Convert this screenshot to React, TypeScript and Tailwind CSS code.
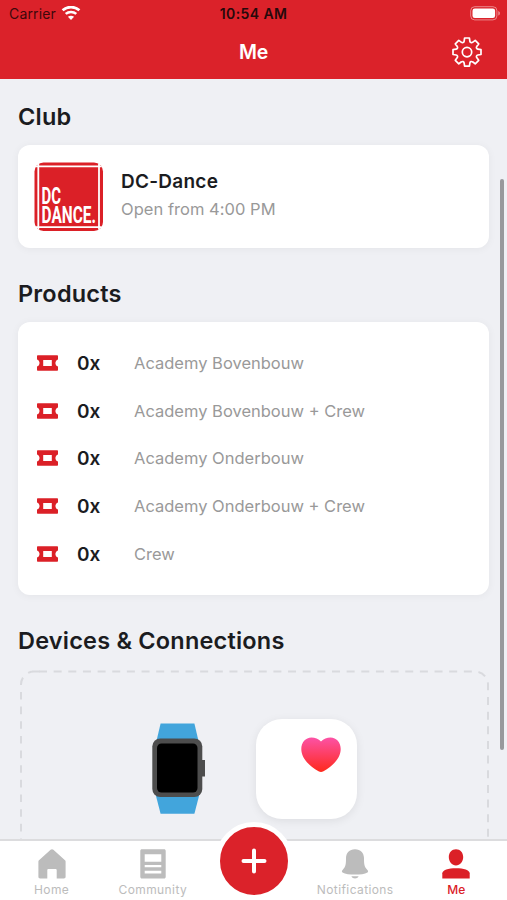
import React from 'react';

interface Product {
  id: number;
  count: number;
  name: string;
}

const products: Product[] = [
  { id: 1, count: 0, name: 'Academy Bovenbouw' },
  { id: 2, count: 0, name: 'Academy Bovenbouw + Crew' },
  { id: 3, count: 0, name: 'Academy Onderbouw' },
  { id: 4, count: 0, name: 'Academy Onderbouw + Crew' },
  { id: 5, count: 0, name: 'Crew' },
];

const WifiIcon = () => (
  <svg width="20" height="16" viewBox="0 0 20 16" fill="none" stroke="#fff">
    <path d="M1.6 4.3C6.4 0 13.6 0 18.4 4.3" strokeWidth="2.7" />
    <path d="M4.7 7.9c3-2.7 7.6-2.7 10.6 0" strokeWidth="2.5" />
    <path d="M10 14 6.900 10.800c1.700-1.500 4.500-1.500 6.200 0Z" fill="#fff" stroke="none" />
  </svg>
);

const BatteryIcon = () => (
  <svg width="31" height="15" viewBox="0 0 31 15" fill="none">
    <rect x="0.7" y="0.7" width="26.2" height="13.2" rx="4" stroke="#fff" strokeOpacity="0.45" />
    <rect x="2.5" y="2.5" width="22.6" height="9.6" rx="2.3" fill="#fff" />
    <path d="M28.3 5v4.6c1-.4 1.6-1.3 1.6-2.3S29.3 5.4 28.3 5Z" fill="#fff" fillOpacity="0.5" />
  </svg>
);

const GearIcon = () => (
  <svg width="32" height="32" viewBox="0 0 32 32" fill="none" stroke="#fff" strokeWidth="1.7" strokeLinejoin="round">
    <path d="M13.6 1h4.800l.5 3.300c.2 1.200 1.700 1.800 2.600 1.100l2.700-2 3.500 3.500-2 2.700c-.7.900-.1 2.400 1.100 2.600l3.200.5v4.800l-3.200.5c-1.200.2-1.800 1.700-1.100 2.600l2 2.700-3.500 3.500-2.700-2c-.9-.7-2.400-.1-2.600 1.100l-.5 3.300h-4.800l-.5-3.300c-.2-1.200-1.700-1.800-2.600-1.100l-2.700 2-3.500-3.500 2-2.700c.7-.9.1-2.400-1.100-2.600l-3.200-.5v-4.800l3.200-.5c1.200-.2 1.800-1.700 1.100-2.600l-2-2.700 3.500-3.500 2.700 2c.9.700 2.400.1 2.600-1.100Z" />
    <circle cx="16" cy="15.100" r="4.700" />
  </svg>
);

const ClubLogo = () => (
  <svg
    width="70"
    height="70"
    viewBox="0 0 70 70"
    fontFamily="Roboto, sans-serif"
    fontWeight="700"
    fill="#fff"
    className="overflow-visible"
  >
    <rect x="0.5" y="0.5" width="68.5" height="68.5" rx="9" fill="#db2027" />
    <path d="M2 4.300h65.500M2 65.200h65.500M4.300 2v65.500M65 2v65.500" stroke="#fff" strokeWidth="1.800" />
    <text x="7.500" y="41.700" fontSize="23" textLength="19.500" lengthAdjust="spacingAndGlyphs">
      DC
    </text>
    <text x="7.500" y="60.700" fontSize="23" textLength="54.500" lengthAdjust="spacingAndGlyphs">
      DANCE.
    </text>
  </svg>
);

const TicketIcon = () => (
  <svg width="21" height="16" viewBox="0 0 21 16" fill="#db2027" className="block">
    <path
      fillRule="evenodd"
      d="M1 .3h19c.6 0 1 .4 1 1v3.200c-3.400 1-3.400 6 0 7v3.200c0 .6-.4 1-1 1H1c-.6 0-1-.4-1-1v-3.200c3.400-1 3.400-6 0-7V1.300c0-.6.4-1 1-1ZM6.200 5v6h8.600V5Z"
    />
  </svg>
);

const WatchIcon = () => (
  <svg width="54" height="92" viewBox="0 0 54 92">
    <path d="M8.600.5h33.800L47 20v53l-4.600 17.800H8.600L4 73V20Z" fill="#42a5dc" />
    <rect x="48" y="37" width="5" height="16.5" fill="#4d4d4d" />
    <rect x="0.3" y="15.5" width="50" height="58.5" rx="8" fill="#4d4d4d" />
    <rect x="5" y="20.5" width="40.5" height="49" rx="4.5" fill="#000" />
  </svg>
);

const HeartIcon = () => (
  <svg width="40" height="36" viewBox="0 0 40 36">
    <defs>
      <linearGradient id="heart" x1="0" y1="0" x2="0" y2="1">
        <stop offset="0" stopColor="#fc52a6" />
        <stop offset="1" stopColor="#fe2a1c" />
      </linearGradient>
    </defs>
    <path
      fill="url(#heart)"
      d="M20 4.500C22.500 2 26 .5 29.500.5 35.500.5 39.700 5.500 39.700 12c0 9-7.700 17-17.200 22.300-1.800 1-3.200 1-5 0C8 29 .3 21 .3 12 .3 5.500 4.500.5 10.500.5 14 .5 17.500 2 20 4.500Z"
    />
  </svg>
);

const HomeIcon = () => (
  <svg width="28" height="30" viewBox="0 0 28 30" fill="#bcbcbc">
    <path d="M12.600.7c.8-.7 2-.7 2.800 0L27 11.200c.4.400.6.800.6 1.400v15.200c0 .9-.7 1.700-1.700 1.700h-7.200v-8.300c0-.7-.5-1.200-1.200-1.200h-7c-.7 0-1.200.5-1.200 1.200v8.300H2.100c-1 0-1.700-.8-1.700-1.700V12.600c0-.6.2-1 .6-1.400Z" />
  </svg>
);

const CommunityIcon = () => (
  <svg width="28" height="30" viewBox="0 0 28 30" fill="#bcbcbc">
    <path
      fillRule="evenodd"
      d="M2.800.3h22.400c.8 0 1.500.7 1.500 1.500v26.200c0 .8-.7 1.500-1.500 1.500H2.800c-.8 0-1.500-.7-1.500-1.500V1.800c0-.8.7-1.500 1.500-1.500ZM5.700 5.300v7.500h16.600V5.300ZM5.700 16v2.200h16.600V16ZM5.700 21.700v2.700h16.600v-2.700Z"
    />
  </svg>
);

const BellIcon = () => (
  <svg width="28" height="30" viewBox="0 0 28 30" fill="#bcbcbc">
    <path d="M14 .3c5.700 0 8.900 3.700 9 8.800 0 6 .2 8.700 3.200 11.600 1 1 1.300 2 .3 2.700-2.700 1.500-7.300 2.200-12.500 2.200S4.200 24.900 1.500 23.400c-1-.7-.7-1.700.3-2.700 3-2.900 3.200-5.600 3.200-11.600C5.100 4 8.300.3 14 .3Z" />
    <path d="M10.400 27.300h7.200c-.7 1.500-2 2.200-3.600 2.200s-2.900-.7-3.600-2.200Z" />
  </svg>
);

const PersonIcon = () => (
  <svg width="28" height="30" viewBox="0 0 28 30" fill="#db2027">
    <path d="M14 .3c4.200 0 7.200 3.300 7.200 7.800 0 4.700-3.200 8.300-7.200 8.300s-7.200-3.600-7.200-8.300C6.800 3.600 9.800.3 14 .3Z" />
    <path d="M.3 29.500v-5.200c0-3.200 6-5.100 13.700-5.100s13.700 1.900 13.700 5.100v5.200Z" />
  </svg>
);

interface TabProps {
  label: string;
  icon: React.ReactNode;
  active?: boolean;
}

const Tab: React.FC<TabProps> = ({ label, icon, active }) => (
  <button className="flex flex-1 flex-col items-center pt-2">
    {icon}
    <span
      className={`mt-[3px] text-[12px] leading-4 ${
        active ? 'font-medium tracking-[0.2px] text-[#db2027]' : 'tracking-[0.4px] text-[#bcbcbc]'
      }`}
    >
      {label}
    </span>
  </button>
);

export default function App() {
  return (
    <div className="flex h-[900px] w-[507px] flex-col overflow-hidden bg-[#eff0f4] font-['Inter',sans-serif] text-[#1b1c1f]">
      <header className="h-[79px] shrink-0 bg-[#db222a]">
        <div className="grid h-[27px] grid-cols-3 items-center px-[9px]">
          <div className="flex items-center gap-[5px] text-[14px] tracking-[0.15px] text-[#3d080b]">
            <span>Carrier</span>
            <WifiIcon />
          </div>
          <span className="text-center text-[14px] font-semibold tracking-[0.4px] text-[#26090b]">10:54 AM</span>
          <div className="-mr-[3px] flex justify-end">
            <BatteryIcon />
          </div>
        </div>
        <div className="grid h-[50px] grid-cols-3 items-center px-6">
          <span />
          <h1 className="pt-[2px] text-center text-[19.5px] font-semibold tracking-[-0.2px] text-white">Me</h1>
          <button className="flex justify-end pt-px">
            <GearIcon />
          </button>
        </div>
      </header>

      <main className="relative min-h-0 flex-1 overflow-hidden px-[18px] pt-[22px]">
        <h2 className="text-[23.5px] leading-8 font-semibold tracking-[0.25px]">Club</h2>
        <section className="mt-3 flex h-[103px] items-center rounded-[12px] bg-white px-4 shadow-[0_1px_8px_rgba(0,0,0,0.05)]">
          <ClubLogo />
          <div className="-mt-[3px] ml-[17px]">
            <p className="text-[19px] leading-7 font-semibold tracking-[0.25px]">DC-Dance</p>
            <p className="text-[16.5px] leading-[27px] tracking-[0.03px] text-[#999]">Open from 4:00 PM</p>
          </div>
        </section>

        <h2 className="mt-[30px] text-[23.5px] leading-8 font-semibold tracking-[0.2px]">Products</h2>
        <section className="mt-3 h-[273px] rounded-[12px] bg-white px-[19px] pt-[17px] shadow-[0_1px_8px_rgba(0,0,0,0.05)]">
          {products.map((product) => (
            <div key={product.id} className="flex h-[47.7px] items-center">
              <TicketIcon />
              <span className="ml-[19px] w-[57px] pt-[3px] text-[19px] font-semibold">{product.count}x</span>
              <span className="pt-px text-[16.5px] text-[#999]">{product.name}</span>
            </div>
          ))}
        </section>

        <h2 className="mt-[30px] text-[23.5px] leading-8 font-semibold tracking-[0.2px]">Devices &amp; Connections</h2>
        <section className="relative mt-[13px] flex h-[220px] items-start pt-[47px]">
          {/* Dashed outline */}
          <svg className="absolute top-0 left-0" width="471" height="220" fill="none" stroke="#d9dade" strokeWidth="2">
            <path d="M14 1.500h8M3 220V14.500A13 13 0 0 1 16 1.500" strokeDasharray="7.600 7.050" />
            <path d="M21 1.500H457A13 13 0 0 1 470 14.500V220" strokeDasharray="8 6.650" />
          </svg>
          <div className="mt-[6px] ml-[134px]">
            <WatchIcon />
          </div>
          <div className="mt-[2px] ml-[50px] flex h-[100px] w-[101px] justify-end rounded-[26px] bg-white pt-[18px] pr-4 shadow-[0_2px_10px_rgba(0,0,0,0.08)]">
            <HeartIcon />
          </div>
        </section>

        {/* Scroll indicator */}
        <div className="absolute top-[100px] right-[3px] h-[571px] w-1 rounded-full bg-[#98999c]" />
      </main>

      <nav className="relative flex h-[61px] shrink-0 border-t-2 border-[#dcdcde] bg-white pl-px">
        <Tab label="Home" icon={<HomeIcon />} />
        <Tab label="Community" icon={<CommunityIcon />} />
        <div className="flex-1" />
        <Tab label="Notifications" icon={<BellIcon />} />
        <Tab label="Me" icon={<PersonIcon />} active />
        <button className="absolute -top-[19px] left-1/2 flex size-[78px] -translate-x-1/2 items-center justify-center rounded-full border-[5px] border-white bg-[#db222a]">
          <svg width="26" height="26" viewBox="0 0 26 26" stroke="#fff" strokeWidth="4" strokeLinecap="round">
            <path d="M13 2.5v21M2.5 13h21" />
          </svg>
        </button>
      </nav>
    </div>
  );
}
